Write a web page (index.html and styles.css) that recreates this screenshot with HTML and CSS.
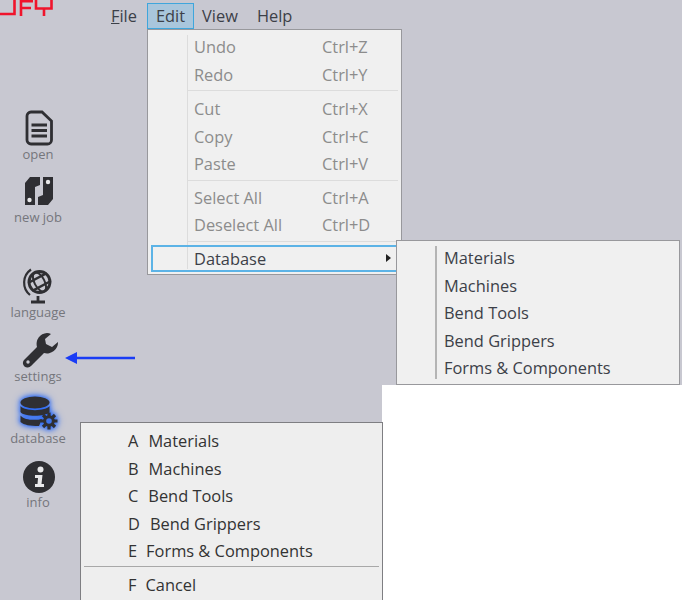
FILE: index.html
```html
<!DOCTYPE html>
<html lang="en">
<head>
    <meta charset="UTF-8">
    <meta name="viewport" content="width=device-width, initial-scale=1.0">
    <title>Database menu</title>
    <link rel="stylesheet" href="styles.css">
</head>
<body>
    <div class="app">
        <svg class="logo" width="54" height="16" viewBox="0 0 54 16" fill="none" stroke="#f0142c" stroke-width="2.6">
            <path d="M0 14H14.5V0"/>
            <path d="M21 16V1.2H33M21 8H31"/>
            <path d="M36 0V8.5H51.5V0M44 8.5V16"/>
        </svg>

        <nav class="side">
            <div class="side-item item-open">
                <svg width="32" height="36" viewBox="0 0 32 36">
                    <path d="M9 2H20L29.5 11V30A4 4 0 0 1 25.500 34H9A4 4 0 0 1 5 30V6A4 4 0 0 1 9 2Z" fill="none" stroke="#2f2f33" stroke-width="2.8"/>
                    <path d="M9.500 15H25M9.500 20.500H25M9.500 26H25" stroke="#2f2f33" stroke-width="2.8"/>
                </svg>
                <span>open</span>
            </div>
            <div class="side-item item-job">
                <svg width="32" height="32" viewBox="0 0 32 32">
                    <path d="M17 2H7L2 8V30H12V12L17 10Z" fill="#2f2f33"/>
                    <path d="M15 30H25L30 24V2H20V20L15 22Z" fill="#2f2f33"/>
                    <circle cx="25" cy="7" r="2.200" fill="#e8e8ea"/>
                    <circle cx="6.500" cy="25" r="2.200" fill="#e8e8ea"/>
                </svg>
                <span>new job</span>
            </div>
            <div class="side-item item-language">
                <svg width="32" height="36" viewBox="0 0 32 36">
                    <circle cx="17.500" cy="14" r="10.500" fill="none" stroke="#2f2f33" stroke-width="2.800"/>
                    <g transform="rotate(-28 17.500 14)" fill="none" stroke="#2f2f33">
                        <ellipse cx="17.500" cy="14" rx="5" ry="10.500" stroke-width="2"/>
                        <path d="M7 9.500H28M7 18.500H28" stroke-width="2.400"/>
                    </g>
                    <path d="M9 1.500A16 16 0 0 0 8 27" fill="none" stroke="#2f2f33" stroke-width="2.200"/>
                    <path d="M16 28V33M9 34H23" stroke="#2f2f33" stroke-width="2.800"/>
                </svg>
                <span>language</span>
            </div>
            <div class="side-item item-settings">
                <svg width="38" height="36" viewBox="0 0 38 36">
                    <path d="M25 1A11 11 0 0 0 15 15L2 28A4.500 4.500 0 0 0 9 34L22 21A11 11 0 0 0 36 10L30 15L24 12L23 7L29 2A11 11 0 0 0 25 1Z" fill="#2f2f33"/>
                    <circle cx="6" cy="30" r="1.700" fill="#c8c8d0"/>
                </svg>
                <span>settings</span>
            </div>
            <div class="side-item item-database">
                <svg width="38" height="34" viewBox="0 0 38 34">
                    <ellipse cx="15" cy="6.500" rx="14.500" ry="6" fill="#2f2f33"/>
                    <path d="M0.500 10C4 15.500 26 15.500 29.500 10V16C26 21 4 21 0.500 16Z" fill="#2f2f33"/>
                    <path d="M0.500 19.500C4 24.500 16 24.500 22 23L19 30C10 30 4 29 0.500 26Z" fill="#2f2f33"/>
                    <g stroke="#2f2f33" stroke-width="3.200">
                        <path d="M29 16.500V33.500M20.500 25H37.500M23 19L35 31M35 19L23 31"/>
                    </g>
                    <circle cx="29" cy="25" r="5.800" fill="#2f2f33"/>
                    <circle cx="29" cy="25" r="2.800" fill="#3f73e8"/>
                </svg>
                <span>database</span>
            </div>
            <div class="side-item item-info">
                <svg width="34" height="34" viewBox="0 0 34 34">
                    <circle cx="17" cy="17" r="16" fill="#2f2f33"/>
                    <circle cx="18.500" cy="9.500" r="3" fill="#e8e8ea"/>
                    <path d="M13 15H20.500L19.500 24H22V27H13V24H15.500L16 18H13Z" fill="#e8e8ea"/>
                </svg>
                <span>info</span>
            </div>
        </nav>

        <div class="menubar">
            <span class="top-item"><u>F</u>ile</span>
            <span class="top-item top-active">Edit</span>
            <span class="top-item">View</span>
            <span class="top-item top-help">Help</span>
        </div>

        <svg class="arrow" width="70" height="14" viewBox="0 0 70 14">
            <path d="M0 7L12 1V13Z" fill="#1a3cf5"/>
            <path d="M10 7H70" stroke="#1a3cf5" stroke-width="2.400"/>
        </svg>

        <div class="blank"></div>

        <div class="menu edit-menu">
            <div class="row off"><span>Undo</span><span>Ctrl+Z</span></div>
            <div class="row off"><span>Redo</span><span>Ctrl+Y</span></div>
            <div class="sep"></div>
            <div class="row off"><span>Cut</span><span>Ctrl+X</span></div>
            <div class="row off"><span>Copy</span><span>Ctrl+C</span></div>
            <div class="row off"><span>Paste</span><span>Ctrl+V</span></div>
            <div class="sep sep-tight"></div>
            <div class="row off"><span>Select All</span><span>Ctrl+A</span></div>
            <div class="row off"><span>Deselect All</span><span>Ctrl+D</span></div>
            <div class="sep sep-tight"></div>
            <div class="row row-active"><span>Database</span><i class="caret"></i></div>
        </div>

        <div class="menu sub-menu">
            <div class="row">Materials</div>
            <div class="row">Machines</div>
            <div class="row">Bend Tools</div>
            <div class="row">Bend Grippers</div>
            <div class="row">Forms &amp; Components</div>
        </div>

        <div class="menu db-menu">
            <div class="row"><span class="key">A</span>Materials</div>
            <div class="row"><span class="key">B</span>Machines</div>
            <div class="row"><span class="key">C</span>Bend Tools</div>
            <div class="row"><span class="key">D</span>Bend Grippers</div>
            <div class="row"><span class="key key-tight">E</span>Forms &amp; Components</div>
            <div class="sep"></div>
            <div class="row"><span class="key key-tight">F</span>Cancel</div>
        </div>
    </div>
</body>
</html>
```

FILE: styles.css
```css
html, body {
    margin: 0;
    padding: 0;
}

body {
    font-family: "Open Sans", "Noto Sans", sans-serif;
    font-size: 16.4px;
    color: #3c4048;
}

.app {
    position: relative;
    width: 682px;
    height: 600px;
    overflow: hidden;
    background-color: #c8c8d1;
}

.logo {
    position: absolute;
    left: 0;
    top: 0;
}

/* left icon column */
.side {
    position: absolute;
    left: 0;
    top: 110px;
    width: 76px;
    display: flex;
    flex-direction: column;
    align-items: center;
}

.side-item {
    display: flex;
    flex-direction: column;
    align-items: center;
}

.side-item span {
    font-size: 13px;
    line-height: 16px;
    color: #75767c;
}

.item-job { margin-top: 13px; }
.item-job svg { margin: 0 0 2px 2px; }
.item-language { margin-top: 43px; }
.item-settings { margin-top: 12px; }
.item-settings svg { margin-left: 6px; }
.item-database { margin-top: 12px; }
.item-database svg { margin: 0 0 0 2px; }
.item-info { margin-top: 14px; }
.item-info svg { margin-left: 2px; }

.item-database svg {
    filter: drop-shadow(0 0 2px #2f6cf5) drop-shadow(0 0 3px #2f6cf5);
}

/* top menu */
.menubar {
    position: absolute;
    left: 102px;
    top: 3px;
    display: flex;
}

.top-item {
    padding: 0 8px;
    line-height: 24px;
    border: 1px solid transparent;
}

.top-active {
    margin: 0 -1px 0 1px;
    background-color: #a9c6dc;
    border-color: #3fa6dc;
}

.top-help {
    margin-left: 1px;
}

.arrow {
    position: absolute;
    left: 65px;
    top: 351px;
}

.blank {
    position: absolute;
    left: 382px;
    top: 385px;
    width: 300px;
    height: 215px;
    background-color: #fff;
}

/* popup menus */
.menu {
    position: absolute;
    box-sizing: border-box;
    background-color: #f0f0f0;
    border: 1px solid #98989c;
}

.row {
    display: flex;
    align-items: center;
    height: 27.5px;
}

.sep {
    height: 1px;
    background-color: #dcdcdc;
    margin: 2px 3px 4px 39px;
}

.sep-tight {
    margin-bottom: 3px;
}

.edit-menu {
    left: 147px;
    top: 29px;
    width: 255px;
    height: 246px;
    padding-top: 3px;
}

.edit-menu::before {
    content: "";
    position: absolute;
    left: 39px;
    top: 5px;
    bottom: 5px;
    width: 1px;
    background-color: #dcdcdc;
}

.edit-menu .row {
    justify-content: space-between;
    padding-left: 46px;
}

.edit-menu .row span:last-child {
    width: 79px;
}

.off {
    color: #8c8c8c;
}

.edit-menu .row-active {
    position: relative;
    height: 27px;
    margin: 0 -1px 0 3px;
    padding-left: 41px;
    box-sizing: border-box;
    border: 2px solid #5cb3e6;
}

.edit-menu .row-active span:last-child {
    width: auto;
}

.caret {
    width: 0;
    height: 0;
    margin-right: 9px;
    border-left: 5px solid #222;
    border-top: 4px solid transparent;
    border-bottom: 4px solid transparent;
}

.sub-menu {
    left: 396px;
    top: 240px;
    width: 284px;
    height: 145px;
    padding: 3px 0 0 47px;
}

.sub-menu::before {
    content: "";
    position: absolute;
    left: 38px;
    top: 5px;
    bottom: 5px;
    width: 2px;
    background-color: #b4b4b4;
}

.db-menu {
    left: 80px;
    top: 422px;
    width: 303px;
    height: 190px;
    background-color: #eeeeee;
    border-color: #7e7e82;
    color: #333;
    padding: 4px 0 0 47px;
}

.db-menu .sep {
    background-color: #a8a8a8;
    margin: 1.5px 3px 4px -44px;
}

.key {
    margin-right: 10px;
}

.key-tight {
    margin-right: 9px;
}
```
